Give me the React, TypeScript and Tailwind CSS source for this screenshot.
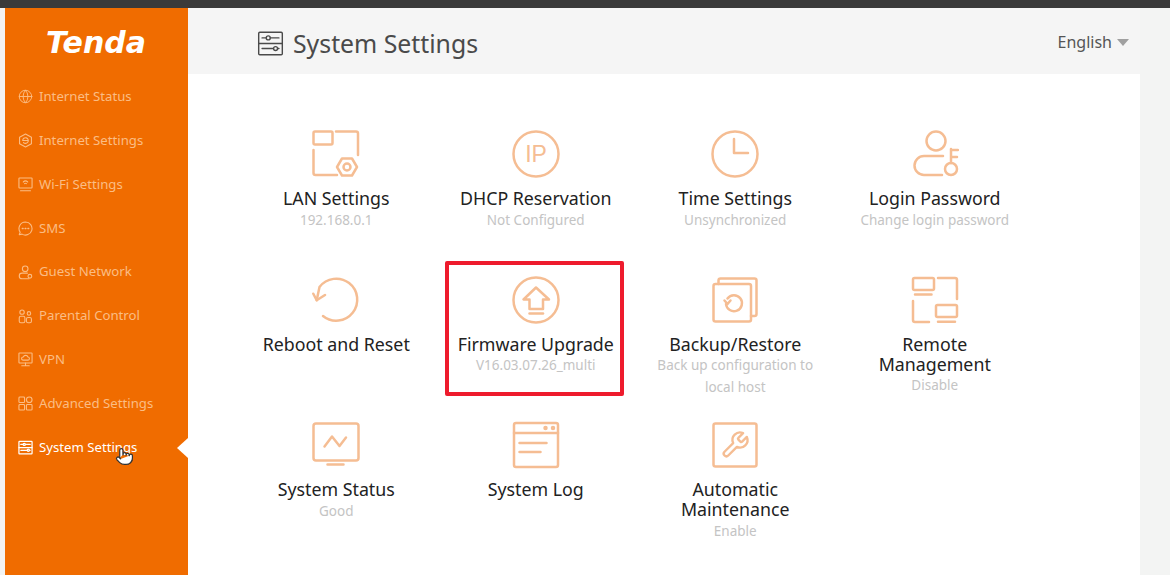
import React from 'react';
import { Globe, Pointer } from 'lucide-react';

const font = { fontFamily: '"Noto Sans", sans-serif' };

function Svg({ children, size = 48, sw = 2.5 }: { children: React.ReactNode; size?: number; sw?: number }) {
  return (
    <svg width={size} height={size} viewBox="0 0 48 48" fill="none" stroke="currentColor" strokeWidth={sw} strokeLinecap="round" strokeLinejoin="round">
      {children}
    </svg>
  );
}

const tiles: { title: string; sub?: string; icon: React.ReactNode; boxed?: boolean }[] = [
  {
    title: 'LAN Settings',
    sub: '192.168.0.1',
    icon: (
      <Svg>
        <rect x="1.5" y="1.5" width="19" height="13" rx="1.5" />
        <path d="M24 1.5h20a2 2 0 0 1 2 2V25M1.5 20v23a2 2 0 0 0 2 2H25" />
        <path d="M25 37l5-8.5h10l5 8.500-5 8.500H30z" />
        <circle cx="35" cy="37" r="3.500" />
      </Svg>
    ),
  },
  {
    title: 'DHCP Reservation',
    sub: 'Not Configured',
    icon: (
      <Svg>
        <circle cx="24" cy="24" r="22.500" />
        <text x="24" y="32" textAnchor="middle" fontSize="23" fill="currentColor" stroke="none" style={{ fontFamily: '"Liberation Sans", sans-serif' }}>IP</text>
      </Svg>
    ),
  },
  {
    title: 'Time Settings',
    sub: 'Unsynchronized',
    icon: (
      <Svg>
        <circle cx="24" cy="24" r="22.500" />
        <path d="M23 9v14h14" />
      </Svg>
    ),
  },
  {
    title: 'Login Password',
    sub: 'Change login password',
    icon: (
      <Svg>
        <circle cx="25" cy="11" r="9.500" />
        <path d="M32 26H13a9.500 9.500 0 0 0 0 19h18" />
        <circle cx="40" cy="39" r="6" />
        <path d="M40 33V19M40 20h7M40 27h6" />
      </Svg>
    ),
  },
  {
    title: 'Reboot and Reset',
    icon: (
      <Svg>
        <path d="M11 40A21 21 0 1 0 7.500 11L4.700 24.300" />
        <path d="M1.300 17.700L4.700 24.300 13 19" />
      </Svg>
    ),
  },
  {
    title: 'Firmware Upgrade',
    sub: 'V16.03.07.26_multi',
    boxed: true,
    icon: (
      <Svg>
        <circle cx="24" cy="24" r="22.500" />
        <path d="M24 11.500L11.500 23.500H17.500V33H31V23.500H37z" />
        <path d="M17.500 37.500H31" />
      </Svg>
    ),
  },
  {
    title: 'Backup/Restore',
    sub: 'Back up configuration to local host',
    icon: (
      <Svg>
        <rect x="2.500" y="8" width="37.500" height="37.500" rx="2" />
        <path d="M7.500 8V4.500a2 2 0 0 1 2-2H43.500a2 2 0 0 1 2 2V38a2 2 0 0 1-2 2H40" />
        <path d="M16.500 22.500A8 8 0 1 1 15 28" />
        <path d="M13.500 24.500L16.500 28l3-3.500" />
      </Svg>
    ),
  },
  {
    title: 'Remote Management',
    sub: 'Disable',
    icon: (
      <Svg>
        <rect x="2" y="2" width="21" height="12" rx="1.500" />
        <path d="M4 18.500h16.500M27 2h17a2 2 0 0 1 2 2v19M2 25v19a2 2 0 0 0 2 2h14" />
        <rect x="25" y="29" width="21" height="12" rx="1.500" />
        <path d="M27 45.700h17" />
      </Svg>
    ),
  },
  {
    title: 'System Status',
    sub: 'Good',
    icon: (
      <Svg>
        <rect x="1.500" y="2.500" width="45" height="37" rx="2.500" />
        <path d="M15.500 43.500H31.500M12.500 25.500l7.500-10 7.500 9.500 6.500-8.500" />
      </Svg>
    ),
  },
  {
    title: 'System Log',
    icon: (
      <Svg>
        <rect x="2" y="2" width="44" height="44" rx="2" />
        <path d="M2 12h44M7.500 22h27M7.500 31h21" />
        <circle cx="33.500" cy="7" r="1" fill="currentColor" />
        <circle cx="41" cy="7" r="1" fill="currentColor" />
      </Svg>
    ),
  },
  {
    title: 'Automatic Maintenance',
    sub: 'Enable',
    icon: (
      <Svg>
        <rect x="2.500" y="2.500" width="43" height="43" rx="2" />
        <path
          transform="translate(9 9) scale(1.25)"
          strokeWidth="1.900"
          d="M14.700 6.300a1 1 0 0 0 0 1.400l1.600 1.600a1 1 0 0 0 1.400 0l3.770-3.770a6 6 0 0 1-7.940 7.940l-6.910 6.910a2.120 2.120 0 0 1-3-3l6.910-6.910a6 6 0 0 1 7.940-7.940l-3.760 3.760z"
        />
      </Svg>
    ),
  },
];

function SlidersBox({ size, sw }: { size: number; sw: number }) {
  return (
    <Svg size={size} sw={sw}>
      <rect x="3" y="4" width="42" height="40" rx="2" />
      <path d="M3 24h42M9 14h7M24 14h15M9 33h20M37 33h2" />
      <circle cx="20" cy="14" r="3.500" />
      <circle cx="33" cy="33" r="3.500" />
    </Svg>
  );
}

const navItems: { label: string; icon: React.ReactNode; active?: boolean }[] = [
  { label: 'Internet Status', icon: <Globe size={15} strokeWidth={1.500} /> },
  {
    label: 'Internet Settings',
    icon: (
      <Svg size={15} sw={3.500}>
        <path d="M24 3l19 10.500v21L24 45 5 34.500v-21z" />
        <path d="M15 24a9 9 0 1 1 2.500 6.500M15 24h17" />
      </Svg>
    ),
  },
  {
    label: 'Wi-Fi Settings',
    icon: (
      <Svg size={15} sw={3.500}>
        <rect x="3" y="3" width="42" height="32" rx="2" />
        <path d="M8 44h32M17 16a10 10 0 0 1 14 0M21 21a5 5 0 0 1 6 0" />
      </Svg>
    ),
  },
  {
    label: 'SMS',
    icon: (
      <Svg size={15} sw={3.500}>
        <path d="M24 3a21 21 0 1 1-11 39l-9 2 3-8A21 21 0 0 1 24 3z" />
        <path d="M14 24h2M23 24h2M32 24h2" strokeWidth="5" />
      </Svg>
    ),
  },
  {
    label: 'Guest Network',
    icon: (
      <Svg size={15} sw={3.500}>
        <circle cx="23" cy="12" r="9" />
        <path d="M30 26H13a9 9 0 0 0 0 18h22" />
        <circle cx="38" cy="36" r="6" />
      </Svg>
    ),
  },
  {
    label: 'Parental Control',
    icon: (
      <Svg size={15} sw={3.500}>
        <circle cx="13" cy="10" r="7" />
        <circle cx="35" cy="14" r="5.500" />
        <rect x="4" y="23" width="18" height="21" rx="5" />
        <rect x="27" y="27" width="16" height="17" rx="5" />
      </Svg>
    ),
  },
  {
    label: 'VPN',
    icon: (
      <Svg size={15} sw={3.500}>
        <rect x="3" y="3" width="42" height="32" rx="2" />
        <path d="M24 35v9M12 44h24M16 26h15a5 5 0 0 0 1-10 8 8 0 0 0-15 0 5 5 0 0 0-1 10z" />
      </Svg>
    ),
  },
  {
    label: 'Advanced Settings',
    icon: (
      <Svg size={15} sw={3.500}>
        <rect x="3" y="3" width="18" height="18" rx="3" />
        <rect x="27" y="3" width="18" height="18" rx="9" />
        <rect x="3" y="27" width="18" height="18" rx="3" />
        <rect x="27" y="27" width="18" height="18" rx="3" />
      </Svg>
    ),
  },
  { label: 'System Settings', icon: <SlidersBox size={15} sw={4} />, active: true },
];

export default function App() {
  return (
    <div className="h-[575px] w-[1170px] overflow-hidden bg-[#f3f4f3] flex flex-col" style={font}>
      <div className="h-[8px] shrink-0 bg-[#3a3a3a]" />
      <div className="flex flex-1 min-h-0 pl-[5px] pr-[30px]">
        {/* Sidebar */}
        <aside className="w-[183px] shrink-0 bg-[#f06c00]">
          <div className="h-[67px] flex items-center pl-[41px] pt-[3px]">
            <span className="text-white text-[30px] leading-none font-bold italic" style={{ fontFamily: '"DejaVu Sans", sans-serif' }}>
              Tenda
            </span>
          </div>
          {navItems.map((item) => (
            <div
              key={item.label}
              className={`relative h-[43.850px] flex items-center gap-[6px] pl-[13px] text-[13.200px] ${item.active ? 'text-white' : 'text-[#fbbd84]'}`}
            >
              <span className="w-[15px] flex justify-center">{item.icon}</span>
              <span>{item.label}</span>
              {item.active && (
                <>
                  <span className="absolute right-0 top-[12px] w-0 h-0 border-y-[10px] border-y-transparent border-r-[11px] border-r-white" />
                  <Pointer size={19} strokeWidth={1.500} fill="#ffffff" className="absolute left-[110px] top-[21px] text-[#333333]" />
                </>
              )}
            </div>
          ))}
        </aside>

        {/* Main */}
        <main className="flex-1 bg-white">
          <header className="h-[66px] bg-[#f5f5f5] flex items-center justify-between pl-[69px] pr-[11px] pt-[5px] text-[#4a4a4a]">
            <div className="flex items-center gap-[9px]">
              <SlidersBox size={27} sw={2.500} />
              <h1 className="text-[24.800px] leading-none">System Settings</h1>
            </div>
            <div className="flex items-center gap-[5px] mb-[3px] text-[16px] text-[#555555]">
              English
              <span className="w-0 h-0 mt-[1px] border-x-[6px] border-x-transparent border-t-[7px] border-t-[#a0a0a0]" />
            </div>
          </header>

          <div className="grid grid-cols-[repeat(4,199.500px)] auto-rows-[145.500px] pl-[48.500px] pt-[56px]">
            {tiles.map((tile) => (
              <div key={tile.title} className="relative flex flex-col items-center text-center">
                <div className="h-12 text-[#f5bd93]">{tile.icon}</div>
                <div className="mt-[10px] w-[164px] text-[17.800px] leading-[20px] text-[#222222]">{tile.title}</div>
                {tile.sub && <div className="mt-[1.500px] w-[164px] text-[13.500px] leading-[21.500px] text-[#c4c4c4]">{tile.sub}</div>}
                {tile.boxed && (
                  <span className="absolute left-[9px] top-[-15px] w-[179px] h-[135px] rounded-[2px] border-[4px] border-[#ee1b2d]" />
                )}
              </div>
            ))}
          </div>
        </main>
      </div>
    </div>
  );
}
